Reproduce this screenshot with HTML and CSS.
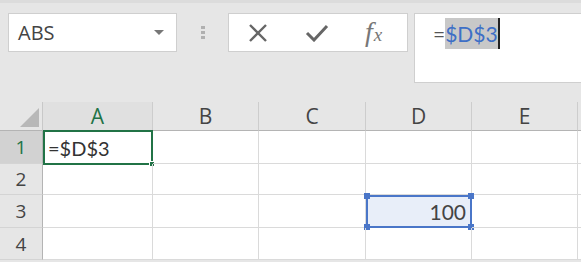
FILE: index.html
```html
<!DOCTYPE html>
<html lang="en">

<head>
    <meta charset="UTF-8">
    <title>Absolute reference</title>
    <link rel="stylesheet" href="styles.css">
</head>

<body>

    <div class="toolbar">
        <div class="name-box">
            <span>ABS</span>
            <span class="caret"></span>
        </div>
        <div class="grip"><i></i><i></i><i></i></div>
        <div class="buttons">
            <svg class="btn" width="22" height="18" viewBox="0 0 22 18">
                <path d="M3 1 L19 17 M19 1 L3 17" stroke="#666" stroke-width="2.4" fill="none" />
            </svg>
            <svg class="btn" width="24" height="18" viewBox="0 0 24 18">
                <path d="M2 9 L9 16 L22 2" stroke="#666" stroke-width="3" fill="none" />
            </svg>
            <span class="fx">f<span class="x">x</span></span>
        </div>
        <div class="formula">
            <span class="eq">=</span><span class="ref">$D$3</span><span class="cursor"></span>
        </div>
    </div>

    <div class="sheet">
        <div class="corner"><span class="tri"></span></div>
        <div class="col-head active">A</div>
        <div class="col-head">B</div>
        <div class="col-head">C</div>
        <div class="col-head">D</div>
        <div class="col-head">E</div>
        <div class="col-head"></div>

        <div class="row-head active">1</div>
        <div class="cell selected">=$D$3<span class="fill"></span></div>
        <div class="cell"></div>
        <div class="cell"></div>
        <div class="cell"></div>
        <div class="cell"></div>
        <div class="cell"></div>

        <div class="row-head">2</div>
        <div class="cell"></div>
        <div class="cell"></div>
        <div class="cell"></div>
        <div class="cell"></div>
        <div class="cell"></div>
        <div class="cell"></div>

        <div class="row-head">3</div>
        <div class="cell"></div>
        <div class="cell"></div>
        <div class="cell"></div>
        <div class="cell ref-cell">100
            <span class="h tl"></span><span class="h tr"></span>
            <span class="h bl"></span><span class="h br"></span>
        </div>
        <div class="cell"></div>
        <div class="cell"></div>

        <div class="row-head">4</div>
        <div class="cell"></div>
        <div class="cell"></div>
        <div class="cell"></div>
        <div class="cell"></div>
        <div class="cell"></div>
        <div class="cell"></div>
    </div>

</body>

</html>
```

FILE: styles.css
```css
* {
    margin: 0;
    padding: 0;
    box-sizing: border-box;
}

html,
body {
    width: 581px;
    height: 262px;
    overflow: hidden;
    background: #e6e6e6;
    font-family: 'Open Sans', 'Liberation Sans', sans-serif;
    color: #444;
}

.toolbar {
    height: 102px;
    border-top: 3px solid #dcdcdc;
    display: flex;
    align-items: flex-start;
    padding: 10px 0 0 8px;
}

.name-box {
    width: 169px;
    height: 39px;
    background: #fff;
    border: 1px solid #cfcfcf;
    display: flex;
    align-items: center;
    justify-content: space-between;
    padding: 0 12px 0 9px;
    font-size: 20px;
    color: #444;
}

.caret {
    width: 0;
    height: 0;
    border-left: 5px solid transparent;
    border-right: 5px solid transparent;
    border-top: 5px solid #777;
}

.grip {
    width: 51px;
    height: 39px;
    display: flex;
    flex-direction: column;
    align-items: center;
    justify-content: center;
    gap: 2px;
}

.grip i {
    width: 4px;
    height: 3px;
    background: #b0b0b0;
}

.buttons {
    width: 180px;
    height: 39px;
    background: #fff;
    border: 1px solid #cfcfcf;
    display: flex;
    align-items: center;
    padding-left: 18px;
    gap: 36px;
}

.fx {
    font-family: 'Liberation Serif', serif;
    font-style: italic;
    font-size: 28px;
    color: #777;
    line-height: 1;
    margin-top: -2px;
}

.fx .x {
    font-size: 19px;
    margin-left: 1px;
}

.formula {
    flex: 1;
    height: 70px;
    margin-left: 6px;
    background: #fff;
    border: 1px solid #cfcfcf;
    border-right: none;
    display: flex;
    align-items: flex-start;
    padding: 4px 0 0 18px;
    font-family: 'Lato', 'Open Sans', sans-serif;
    font-size: 21px;
    line-height: 31px;
}

.eq {
    color: #555;
}

.ref {
    color: #3d6fc6;
    background: #c8c8c8;
}

.cursor {
    width: 2px;
    height: 31px;
    background: #222;
}

.sheet {
    display: grid;
    grid-template-columns: 43px 110px 106px 107px 106px 106px 1fr;
    grid-template-rows: 29px 33px 31px 33px 32px;
    background: #fff;
}

.corner {
    background: #e6e6e6;
    border-bottom: 1px solid #b4b4b4;
    border-right: 1px solid #c8c8c8;
    position: relative;
}

.tri {
    position: absolute;
    right: 3px;
    bottom: 3px;
    width: 0;
    height: 0;
    border-left: 19px solid transparent;
    border-bottom: 19px solid #b8b8b8;
}

.col-head {
    background: #e6e6e6;
    border-bottom: 1px solid #b4b4b4;
    border-right: 1px solid #cdcdcd;
    display: flex;
    align-items: center;
    justify-content: center;
    font-size: 21px;
    color: #444;
}

.col-head.active {
    color: #217346;
    background: #e0e0e0;
}

.row-head {
    background: #e6e6e6;
    border-bottom: 1px solid #d4d4d4;
    border-right: 1px solid #b4b4b4;
    display: flex;
    align-items: center;
    justify-content: center;
    font-size: 19px;
    color: #444;
}

.row-head.active {
    background: #d2d2d2;
    color: #217346;
}

.cell {
    border-bottom: 1px solid #dadada;
    border-right: 1px solid #dadada;
    display: flex;
    align-items: center;
    padding: 0 4px;
    font-family: 'Lato', 'Open Sans', sans-serif;
    font-size: 20px;
    color: #333;
    position: relative;
}

.selected {
    border: 2px solid #217346;
    margin: -1px 0 -1px 0;
    padding-left: 3px;
}

.fill {
    position: absolute;
    right: -4px;
    bottom: -4px;
    width: 6px;
    height: 6px;
    background: #217346;
    border: 1px solid #fff;
}

.ref-cell {
    background: #e8eef9;
    border: 2px solid #4a76c8;
    justify-content: flex-end;
    color: #444;
    font-size: 21px;
}

.h {
    position: absolute;
    width: 6px;
    height: 6px;
    background: #4a76c8;
}

.tl {
    left: -4px;
    top: -4px;
}

.tr {
    right: -4px;
    top: -4px;
}

.bl {
    left: -4px;
    bottom: -4px;
}

.br {
    right: -4px;
    bottom: -4px;
}
```
